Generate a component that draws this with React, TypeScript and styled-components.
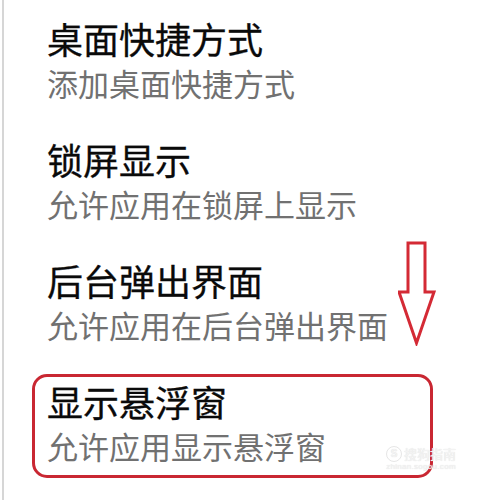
import styled, { createGlobalStyle } from 'styled-components';

const GlobalStyle = createGlobalStyle`
  html, body {
    margin: 0;
    padding: 0;
    background: #fff;
  }
  body {
    font-family: "Noto Sans CJK SC", "Noto Sans", sans-serif;
  }
`;

const items = [
  { title: '桌面快捷方式', desc: '添加桌面快捷方式' },
  { title: '锁屏显示', desc: '允许应用在锁屏上显示' },
  { title: '后台弹出界面', desc: '允许应用在后台弹出界面' },
  { title: '显示悬浮窗', desc: '允许应用显示悬浮窗', marked: true },
];

const App = () => {
  return (
    <>
      <GlobalStyle />
      <Page>
        <List>
          {items.map((item) => (
            <Row key={item.title} $marked={item.marked}>
              <Title>{item.title}</Title>
              <Desc>{item.desc}</Desc>
            </Row>
          ))}
        </List>
        <Arrow viewBox="0 0 38 105" aria-hidden>
          <path
            d="M10 2 H27 V51 H36 L18.5 102 L1 51 H10 Z"
            fill="none"
            stroke="#d42a35"
            strokeWidth="3"
            strokeLinejoin="miter"
          />
        </Arrow>
        <Watermark>
          <Brand>
            <Logo>S</Logo>搜狗指南
          </Brand>
          <Site>zhinan.sogou.com</Site>
        </Watermark>
      </Page>
    </>
  );
};

export default App;

const Page = styled.div`
  position: relative;
  width: 479px;
  height: 500px;
  margin-left: 2px;
  border-left: 2px solid #d6d6d6;
  box-sizing: border-box;
  overflow: hidden;
`;

const List = styled.div`
  display: flex;
  flex-direction: column;
  gap: 17px;
  padding: 11px 0 0 28px;
`;

const Row = styled.div<{ $marked?: boolean }>`
  display: flex;
  flex-direction: column;
  width: 401px;
  box-sizing: border-box;
  padding: 2px 12px 7px;
  border: 3px solid ${({ $marked }) => ($marked ? '#c92732' : 'transparent')};
  border-radius: 15px;
`;

const Title = styled.div`
  font-size: 36px;
  line-height: 44px;
  color: #0a0a0a;
  white-space: nowrap;
  -webkit-text-stroke: 0.3px #0a0a0a;
`;

const Desc = styled.div`
  font-size: 31px;
  line-height: 45px;
  color: #717171;
  white-space: nowrap;
`;

const Arrow = styled.svg`
  position: absolute;
  left: 394px;
  top: 241px;
  width: 38px;
  height: 105px;
`;

const Watermark = styled.div`
  position: absolute;
  left: 382px;
  top: 445px;
  display: flex;
  flex-direction: column;
  align-items: center;
  color: #f3f3f3;
  text-shadow: 0 0 1px #d8d8d8;
  pointer-events: none;
`;

const Brand = styled.div`
  display: flex;
  align-items: center;
  gap: 2px;
  font-size: 13px;
  line-height: 17px;
`;

const Logo = styled.span`
  display: inline-flex;
  align-items: center;
  justify-content: center;
  width: 14px;
  height: 14px;
  border-radius: 50%;
  border: 1px solid #e6e6e6;
  font-family: "Liberation Sans", sans-serif;
  font-size: 10px;
  font-weight: bold;
`;

const Site = styled.div`
  font-family: "Liberation Sans", sans-serif;
  font-size: 8px;
  line-height: 10px;
  letter-spacing: 0.3px;
`;
